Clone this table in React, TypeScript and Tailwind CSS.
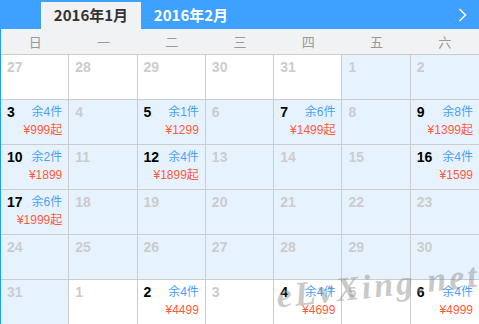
import React from 'react';

type Dia = {
  dia: number;
  mesAtual: boolean;
  vagas?: number;
  preco?: string;
};

const semana = ['日', '一', '二', '三', '四', '五', '六'];

const dias: Dia[] = [
  { dia: 27, mesAtual: false },
  { dia: 28, mesAtual: false },
  { dia: 29, mesAtual: false },
  { dia: 30, mesAtual: false },
  { dia: 31, mesAtual: false },
  { dia: 1, mesAtual: true },
  { dia: 2, mesAtual: true },
  { dia: 3, mesAtual: true, vagas: 4, preco: '¥999起' },
  { dia: 4, mesAtual: true },
  { dia: 5, mesAtual: true, vagas: 1, preco: '¥1299' },
  { dia: 6, mesAtual: true },
  { dia: 7, mesAtual: true, vagas: 6, preco: '¥1499起' },
  { dia: 8, mesAtual: true },
  { dia: 9, mesAtual: true, vagas: 8, preco: '¥1399起' },
  { dia: 10, mesAtual: true, vagas: 2, preco: '¥1899' },
  { dia: 11, mesAtual: true },
  { dia: 12, mesAtual: true, vagas: 4, preco: '¥1899起' },
  { dia: 13, mesAtual: true },
  { dia: 14, mesAtual: true },
  { dia: 15, mesAtual: true },
  { dia: 16, mesAtual: true, vagas: 4, preco: '¥1599' },
  { dia: 17, mesAtual: true, vagas: 6, preco: '¥1999起' },
  { dia: 18, mesAtual: true },
  { dia: 19, mesAtual: true },
  { dia: 20, mesAtual: true },
  { dia: 21, mesAtual: true },
  { dia: 22, mesAtual: true },
  { dia: 23, mesAtual: true },
  { dia: 24, mesAtual: true },
  { dia: 25, mesAtual: true },
  { dia: 26, mesAtual: true },
  { dia: 27, mesAtual: true },
  { dia: 28, mesAtual: true },
  { dia: 29, mesAtual: true },
  { dia: 30, mesAtual: true },
  { dia: 31, mesAtual: true },
  { dia: 1, mesAtual: false },
  { dia: 2, mesAtual: false, vagas: 4, preco: '¥4499' },
  { dia: 3, mesAtual: false },
  { dia: 4, mesAtual: false, vagas: 4, preco: '¥4699' },
  { dia: 5, mesAtual: false },
  { dia: 6, mesAtual: false, vagas: 4, preco: '¥4999' },
];

function Celula({ item, ultima }: { item: Dia; ultima: boolean }) {
  const temDados = item.vagas !== undefined;

  return (
    <div
      className={`h-[45px] border-b border-[#cccccc] pl-[6px] pr-[6px] pt-[3px] leading-[18px] ${
        ultima ? '' : 'border-r'
      } ${item.mesAtual ? 'bg-[#e6f3ff]' : 'bg-white'}`}
    >
      <div className="flex items-center justify-between">
        <span
          className={`font-['Liberation_Sans',sans-serif] text-[14px] font-bold ${
            temDados ? 'text-black' : 'text-[#cccccc]'
          }`}
        >
          {item.dia}
        </span>
        {temDados && (
          <span className="text-[12px] text-[#4a9ff8]">余{item.vagas}件</span>
        )}
      </div>
      {temDados && (
        <div className="text-right text-[12px] text-[#ff5a3c]">{item.preco}</div>
      )}
    </div>
  );
}

export default function App() {
  return (
    <div className="relative w-[479px] h-[324px] overflow-hidden bg-white font-['Liberation_Sans','Noto_Sans_CJK_SC',sans-serif]">
      <div className="h-[29px] bg-[#3ea1ff] flex items-end relative">
        <div className="ml-[41px] w-[100px] h-[27px] bg-[#f1f2f4] flex items-center justify-center text-[15px] font-bold text-[#333333] font-['Noto_Sans_CJK_SC',sans-serif]">
          2016年1月
        </div>
        <div className="w-[100px] h-[27px] flex items-center justify-center text-[15px] font-bold text-white font-['Noto_Sans_CJK_SC',sans-serif]">
          2016年2月
        </div>
        <svg
          className="absolute right-[12px] top-[8px]"
          width="9"
          height="14"
          viewBox="0 0 9 14"
          fill="none"
        >
          <path d="M1.5 1 L7.5 7 L1.5 13" stroke="white" strokeWidth="1.5" />
        </svg>
      </div>

      <div className="border-l border-[#1aa0ff]">
        <div className="grid grid-cols-7 h-[26px] bg-[#f1f2f4] border-b border-[#cccccc]">
          {semana.map((d) => (
            <div
              key={d}
              className="flex items-center justify-center text-[13px] text-[#999999] font-['Noto_Sans_CJK_SC',sans-serif]"
            >
              {d}
            </div>
          ))}
        </div>

        <div className="grid grid-cols-7">
          {dias.map((item, i) => (
            <Celula key={i} item={item} ultima={i % 7 === 6} />
          ))}
        </div>
      </div>

      <div className="absolute left-[276px] top-[266px] -rotate-[6deg] font-['Liberation_Serif',serif] italic font-bold text-[34px] leading-[40px] tracking-[3px] text-[#8a8a8a] opacity-45 pointer-events-none">
        eLvXing.net
      </div>
    </div>
  );
}
